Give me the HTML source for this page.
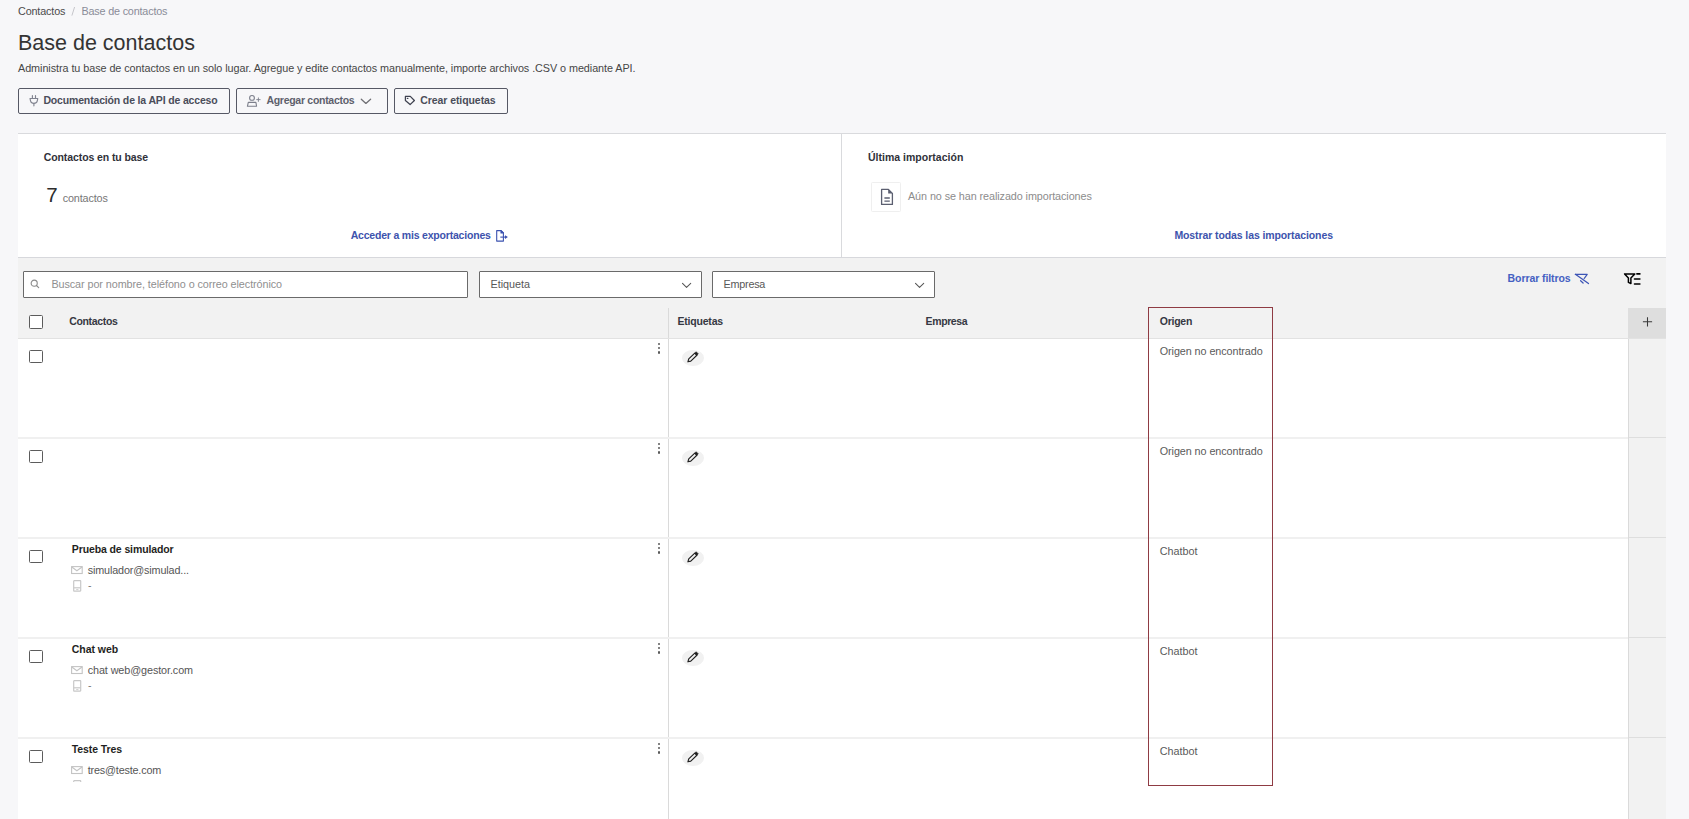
<!DOCTYPE html>
<html lang="es">
<head>
<meta charset="utf-8">
<title>Base de contactos</title>
<style>
*{box-sizing:border-box;margin:0;padding:0}
html,body{width:1689px;height:819px;overflow:hidden;background:#f7f7f9;font-family:"Liberation Sans",sans-serif}
body{position:relative}
.t{position:absolute;white-space:nowrap;line-height:1}
.a{position:absolute}
.btn{position:absolute;top:88px;height:26px;border:1px solid #565865;border-radius:2px;background:#f7f7f9}
.inp{position:absolute;top:271px;height:27px;background:#fff;border:1.2px solid #6a6a6a;border-radius:1px}
.cb{position:absolute;left:29px;width:14px;height:14px;border:1.3px solid #5c5c5c;border-radius:1.5px;background:#fff}
.kb{position:absolute;left:657.8px;width:2.4px;height:2.4px;background:#5a5a5a;border-radius:50%}
.pen{position:absolute;left:682px;width:22px;height:16px;border-radius:50%;background:#f1f1f1}
svg{position:absolute;overflow:visible}
</style>
</head>
<body>
<div class="t" style="left:18px;top:5.76px;font-size:10.8px;color:#4b4b4b;letter-spacing:-0.153px;">Contactos</div>
<svg style="left:70px;top:6px" width="6" height="11" viewBox="0 0 6 11"><path d="M4.6 1L1.9 9.6" stroke="#c6c6cb" stroke-width="1"/></svg>
<div class="t" style="left:81.4px;top:5.76px;font-size:10.8px;color:#8a8c98;letter-spacing:-0.172px;">Base de contactos</div>
<div class="t" style="left:18px;top:32.80px;font-size:21.5px;color:#343434;">Base de contactos</div>
<div class="t" style="left:18px;top:62.76px;font-size:10.8px;color:#464646;letter-spacing:-0.053px;">Administra tu base de contactos en un solo lugar. Agregue y edite contactos manualmente, importe archivos .CSV o mediante API.</div>
<div class="btn" style="left:18px;width:212px"></div>
<div class="btn" style="left:236px;width:152px"></div>
<div class="btn" style="left:394px;width:114px"></div>
<div class="t" style="left:43.4px;top:95.41px;font-size:10.5px;color:#4a4d5a;font-weight:bold;letter-spacing:-0.157px;">Documentación de la API de acceso</div>
<div class="t" style="left:266.4px;top:95.41px;font-size:10.5px;color:#5d606c;font-weight:bold;letter-spacing:-0.280px;">Agregar contactos</div>
<div class="t" style="left:420.2px;top:95.41px;font-size:10.5px;color:#4a4d5a;font-weight:bold;letter-spacing:-0.068px;">Crear etiquetas</div>
<svg style="left:29px;top:94px" width="11" height="13" viewBox="0 0 11 13"><g fill="none" stroke="#80838f" stroke-width="1.15" stroke-linecap="round" stroke-linejoin="round"><path d="M3.4 1.5v2.2M6.5 1.5v2.2"/><path d="M1 4.5H8.8L8.2 7.2Q7.6 9.4 4.9 9.4Q2.2 9.4 1.6 7.2Z"/><path d="M4.9 9.8V11.8"/></g></svg>
<svg style="left:244px;top:92px" width="18" height="16" viewBox="0 0 18 16"><g fill="none" stroke="#7c7f8b" stroke-width="1.1" stroke-linejoin="round"><circle cx="8" cy="5.9" r="2.4"/><path d="M4.3 10.4H11.9L12.6 14.3H3.4Z"/><path d="M14.4 5.5V9.8M12.3 7.6H16.5" stroke-width="0.9"/></g></svg>
<svg style="left:355px;top:94px" width="20" height="14" viewBox="0 0 20 14"><path d="M6.3 5.3L10.9 9.4L15.6 5.3" fill="none" stroke="#6f6f74" stroke-width="1.3" stroke-linecap="round" stroke-linejoin="round"/></svg>
<svg style="left:400px;top:92px" width="18" height="16" viewBox="0 0 18 16"><path d="M5.4 4.4H10.3L14.4 8.5L10.1 12.6L5.4 8.6Z" fill="none" stroke="#3f4250" stroke-width="1.25" stroke-linejoin="round"/><ellipse cx="7.6" cy="6.4" rx="0.9" ry="0.6" fill="#3f4250"/></svg>
<div class="a" style="left:18px;top:133px;width:1648px;height:125px;background:#fff;border-top:1px solid #d9dadd;border-bottom:1px solid #d7d8dc"></div>
<div class="a" style="left:841px;top:134px;width:1px;height:123px;background:#d9dadd"></div>
<div class="t" style="left:43.7px;top:152.41px;font-size:10.5px;color:#303139;font-weight:bold;letter-spacing:-0.089px;">Contactos en tu base</div>
<div class="t" style="left:46.3px;top:184.85px;font-size:20.5px;color:#2d2d2d;">7</div>
<div class="t" style="left:62.7px;top:193.06px;font-size:10.8px;color:#767676;letter-spacing:-0.128px;">contactos</div>
<div class="t" style="left:350.7px;top:230.01px;font-size:10.5px;color:#3d53ad;font-weight:bold;letter-spacing:-0.197px;">Acceder a mis exportaciones</div>
<svg style="left:492px;top:226px" width="18" height="18" viewBox="0 0 18 18"><g stroke="#3b52b0" stroke-width="1.1" stroke-linejoin="round"><path d="M4.7 4.6H9L11.4 7V15.1H4.7Z" fill="none"/><path d="M9 4.6V7H11.4Z" fill="#3b52b0"/><path d="M8.3 11.1H13.5" fill="none"/></g><path d="M13 9.2L15.9 11.1L13 13Z" fill="#3b52b0"/></svg>
<div class="t" style="left:867.9px;top:151.71px;font-size:10.5px;color:#303139;font-weight:bold;letter-spacing:0.024px;">Última importación</div>
<div class="a" style="left:871px;top:182px;width:30px;height:30px;border:1px solid #efefef;border-radius:1.5px;background:#fff"></div>
<svg style="left:880px;top:187.5px" width="15" height="18" viewBox="0 0 15 18"><g fill="none" stroke="#5b5f70" stroke-width="1.3" stroke-linejoin="round"><path d="M1.6 1.4h6.8l4 4v11H1.6z"/><path d="M4.4 10h5.4M4.4 13.1h5.4"/></g><path d="M8.2 1.4v4.2h4.2z" fill="#5b5f70"/></svg>
<div class="t" style="left:908px;top:190.86px;font-size:10.8px;color:#8c8c8c;letter-spacing:-0.078px;">Aún no se han realizado importaciones</div>
<div class="t" style="left:1174.4px;top:230.01px;font-size:10.5px;color:#3d53ad;font-weight:bold;letter-spacing:-0.101px;">Mostrar todas las importaciones</div>
<div class="a" style="left:18px;top:258px;width:1648px;height:561px;background:#f2f2f2"></div>
<div class="inp" style="left:23px;width:445px"></div>
<div class="inp" style="left:479px;width:223px"></div>
<div class="inp" style="left:712px;width:223px"></div>
<svg style="left:30px;top:280px" width="10" height="10" viewBox="0 0 10 10"><g fill="none" stroke="#8a8a8a" stroke-width="1.1" stroke-linecap="round"><circle cx="4.2" cy="3.2" r="3.05"/><path d="M6.5 5.5L8.7 7.6"/></g></svg>
<div class="t" style="left:51.4px;top:279.16px;font-size:10.8px;color:#8f8f8f;letter-spacing:-0.071px;">Buscar por nombre, teléfono o correo electrónico</div>
<div class="t" style="left:490.5px;top:279.16px;font-size:10.8px;color:#575757;letter-spacing:-0.019px;">Etiqueta</div>
<div class="t" style="left:723.6px;top:279.16px;font-size:10.8px;color:#575757;letter-spacing:-0.253px;">Empresa</div>
<svg style="left:680px;top:280px" width="14" height="10" viewBox="0 0 14 10"><path d="M2.5 3.4L6.55 7.4L10.7 3.4" fill="none" stroke="#555" stroke-width="1.05" stroke-linecap="round" stroke-linejoin="round"/></svg>
<svg style="left:912.6px;top:280px" width="14" height="10" viewBox="0 0 14 10"><path d="M2.5 3.4L6.55 7.4L10.7 3.4" fill="none" stroke="#555" stroke-width="1.05" stroke-linecap="round" stroke-linejoin="round"/></svg>
<div class="t" style="left:1507.6px;top:273.31px;font-size:10.5px;color:#4560c2;font-weight:bold;letter-spacing:-0.083px;">Borrar filtros</div>
<svg style="left:1570px;top:268px" width="22" height="20" viewBox="0 0 22 20"><g fill="none" stroke="#3d55b6" stroke-width="1.25" stroke-linecap="round" stroke-linejoin="round"><path d="M5.4 6.3H17.2L14.2 10.5"/><path d="M5.4 6.3L18.5 15.6"/><path d="M10.6 12.7L13.1 15"/></g></svg>
<svg style="left:1618px;top:268px" width="26" height="20" viewBox="0 0 26 20"><path d="M6.6 5.9H16.8L12.9 9.9V15.6L10.4 14.3V9.9Z" fill="none" stroke="#000" stroke-width="1.5" stroke-linejoin="round"/><path d="M18.9 5.9H21.9M16.5 11H21.9M16.5 16H21.9" stroke="#000" stroke-width="1.6" stroke-linecap="round"/></svg>
<div class="a" style="left:18px;top:338px;width:1610px;height:481px;background:#fff"></div>
<div class="a" style="left:1628px;top:308px;width:38px;height:30px;background:#dedede"></div>
<div class="a" style="left:1628px;top:338px;width:1px;height:481px;background:#dadada"></div>
<div class="a" style="left:668px;top:308px;width:1px;height:511px;background:#dadada"></div>
<div class="cb" style="top:315px"></div>
<div class="t" style="left:69.2px;top:315.81px;font-size:10.5px;color:#363842;font-weight:bold;letter-spacing:-0.330px;">Contactos</div>
<div class="t" style="left:677.5px;top:315.81px;font-size:10.5px;color:#363842;font-weight:bold;letter-spacing:-0.208px;">Etiquetas</div>
<div class="t" style="left:925.6px;top:315.81px;font-size:10.5px;color:#363842;font-weight:bold;letter-spacing:-0.393px;">Empresa</div>
<div class="t" style="left:1159.8px;top:315.81px;font-size:10.5px;color:#363842;font-weight:bold;letter-spacing:-0.268px;">Origen</div>
<svg style="left:1642px;top:316px" width="11" height="11" viewBox="0 0 11 11"><path d="M5.5 1.2v9.2M0.9 5.8h9.2" stroke="#3a3a3a" stroke-width="1.05"/></svg>
<div class="a" style="left:18px;top:338px;width:1648px;height:1px;background:#e2e2e2"></div>
<div class="cb" style="top:350px;height:12.8px"></div>
<div class="kb" style="top:342.7px"></div>
<div class="kb" style="top:347.0px"></div>
<div class="kb" style="top:351.3px"></div>
<div class="pen" style="top:350px"></div>
<svg style="left:682px;top:348px" width="20" height="18" viewBox="0 0 20 18"><path d="M5.9 13.8L8.8 13.08L14.86 7.29L12.78 5.13L6.74 10.92Z" fill="none" stroke="#1e1e1e" stroke-width="1.15" stroke-linejoin="round"/><path d="M14.86 7.29L16.3 5.9L14.2 3.75L12.78 5.13Z" fill="#1e1e1e" stroke="#1e1e1e" stroke-width="0.6" stroke-linejoin="round"/></svg>
<div class="t" style="left:1159.8px;top:345.76px;font-size:10.8px;color:#5a5a5a;letter-spacing:-0.083px;">Origen no encontrado</div>
<div class="a" style="left:18px;top:437px;width:1610px;height:2px;background:#f0f0f0"></div>
<div class="a" style="left:1629px;top:437px;width:37px;height:1px;background:#dedede"></div>
<div class="cb" style="top:450px;height:12.8px"></div>
<div class="kb" style="top:442.7px"></div>
<div class="kb" style="top:447.0px"></div>
<div class="kb" style="top:451.3px"></div>
<div class="pen" style="top:450px"></div>
<svg style="left:682px;top:448px" width="20" height="18" viewBox="0 0 20 18"><path d="M5.9 13.8L8.8 13.08L14.86 7.29L12.78 5.13L6.74 10.92Z" fill="none" stroke="#1e1e1e" stroke-width="1.15" stroke-linejoin="round"/><path d="M14.86 7.29L16.3 5.9L14.2 3.75L12.78 5.13Z" fill="#1e1e1e" stroke="#1e1e1e" stroke-width="0.6" stroke-linejoin="round"/></svg>
<div class="t" style="left:1159.8px;top:445.76px;font-size:10.8px;color:#5a5a5a;letter-spacing:-0.083px;">Origen no encontrado</div>
<div class="a" style="left:18px;top:537px;width:1610px;height:2px;background:#f0f0f0"></div>
<div class="a" style="left:1629px;top:537px;width:37px;height:1px;background:#dedede"></div>
<div class="cb" style="top:550px;height:12.8px"></div>
<div class="kb" style="top:542.7px"></div>
<div class="kb" style="top:547.0px"></div>
<div class="kb" style="top:551.3px"></div>
<div class="pen" style="top:550px"></div>
<svg style="left:682px;top:548px" width="20" height="18" viewBox="0 0 20 18"><path d="M5.9 13.8L8.8 13.08L14.86 7.29L12.78 5.13L6.74 10.92Z" fill="none" stroke="#1e1e1e" stroke-width="1.15" stroke-linejoin="round"/><path d="M14.86 7.29L16.3 5.9L14.2 3.75L12.78 5.13Z" fill="#1e1e1e" stroke="#1e1e1e" stroke-width="0.6" stroke-linejoin="round"/></svg>
<div class="t" style="left:1159.8px;top:545.76px;font-size:10.8px;color:#5a5a5a;letter-spacing:-0.021px;">Chatbot</div>
<div class="a" style="left:18px;top:538px;width:640px;height:100px;overflow:hidden"><div class="t" style="left:53.8px;top:5.71px;font-size:10.5px;color:#1f1f22;font-weight:bold;letter-spacing:-0.109px;">Prueba de simulador</div>
<svg style="left:53px;top:28px" width="12" height="9" viewBox="0 0 12 9"><g fill="none" stroke="#c4c4c4" stroke-width="1.1"><rect x="0.6" y="0.6" width="10.6" height="6.9"/><path d="M0.8 1l5.1 3.8 5.1-3.8"/></g></svg>
<div class="t" style="left:69.7px;top:26.76px;font-size:10.8px;color:#555;letter-spacing:-0.137px;">simulador@simulad...</div>
<svg style="left:55px;top:42px" width="9" height="12" viewBox="0 0 9 12"><g fill="none" stroke="#c8c8c8" stroke-width="1.2"><rect x="0.7" y="0.7" width="7" height="10.4" rx="0.5"/><path d="M0.8 7.8h7"/><path d="M3.2 9.6h2.2" stroke-width="0.9"/></g></svg>
<div class="t" style="left:70px;top:41.61px;font-size:10.5px;color:#777;">-</div>
</div>
<div class="a" style="left:18px;top:637px;width:1610px;height:2px;background:#f0f0f0"></div>
<div class="a" style="left:1629px;top:637px;width:37px;height:1px;background:#dedede"></div>
<div class="cb" style="top:650px;height:12.8px"></div>
<div class="kb" style="top:642.7px"></div>
<div class="kb" style="top:647.0px"></div>
<div class="kb" style="top:651.3px"></div>
<div class="pen" style="top:650px"></div>
<svg style="left:682px;top:648px" width="20" height="18" viewBox="0 0 20 18"><path d="M5.9 13.8L8.8 13.08L14.86 7.29L12.78 5.13L6.74 10.92Z" fill="none" stroke="#1e1e1e" stroke-width="1.15" stroke-linejoin="round"/><path d="M14.86 7.29L16.3 5.9L14.2 3.75L12.78 5.13Z" fill="#1e1e1e" stroke="#1e1e1e" stroke-width="0.6" stroke-linejoin="round"/></svg>
<div class="t" style="left:1159.8px;top:645.76px;font-size:10.8px;color:#5a5a5a;letter-spacing:-0.021px;">Chatbot</div>
<div class="a" style="left:18px;top:638px;width:640px;height:100px;overflow:hidden"><div class="t" style="left:53.8px;top:5.71px;font-size:10.5px;color:#1f1f22;font-weight:bold;letter-spacing:-0.053px;">Chat web</div>
<svg style="left:53px;top:28px" width="12" height="9" viewBox="0 0 12 9"><g fill="none" stroke="#c4c4c4" stroke-width="1.1"><rect x="0.6" y="0.6" width="10.6" height="6.9"/><path d="M0.8 1l5.1 3.8 5.1-3.8"/></g></svg>
<div class="t" style="left:69.7px;top:26.76px;font-size:10.8px;color:#555;letter-spacing:-0.090px;">chat web@gestor.com</div>
<svg style="left:55px;top:42px" width="9" height="12" viewBox="0 0 9 12"><g fill="none" stroke="#c8c8c8" stroke-width="1.2"><rect x="0.7" y="0.7" width="7" height="10.4" rx="0.5"/><path d="M0.8 7.8h7"/><path d="M3.2 9.6h2.2" stroke-width="0.9"/></g></svg>
<div class="t" style="left:70px;top:41.61px;font-size:10.5px;color:#777;">-</div>
</div>
<div class="a" style="left:18px;top:737px;width:1610px;height:2px;background:#f0f0f0"></div>
<div class="a" style="left:1629px;top:737px;width:37px;height:1px;background:#dedede"></div>
<div class="cb" style="top:750px;height:12.8px"></div>
<div class="kb" style="top:742.7px"></div>
<div class="kb" style="top:747.0px"></div>
<div class="kb" style="top:751.3px"></div>
<div class="pen" style="top:750px"></div>
<svg style="left:682px;top:748px" width="20" height="18" viewBox="0 0 20 18"><path d="M5.9 13.8L8.8 13.08L14.86 7.29L12.78 5.13L6.74 10.92Z" fill="none" stroke="#1e1e1e" stroke-width="1.15" stroke-linejoin="round"/><path d="M14.86 7.29L16.3 5.9L14.2 3.75L12.78 5.13Z" fill="#1e1e1e" stroke="#1e1e1e" stroke-width="0.6" stroke-linejoin="round"/></svg>
<div class="t" style="left:1159.8px;top:745.76px;font-size:10.8px;color:#5a5a5a;letter-spacing:-0.021px;">Chatbot</div>
<div class="a" style="left:18px;top:738px;width:640px;height:44px;overflow:hidden"><div class="t" style="left:53.8px;top:5.71px;font-size:10.5px;color:#1f1f22;font-weight:bold;letter-spacing:-0.096px;">Teste Tres</div>
<svg style="left:53px;top:28px" width="12" height="9" viewBox="0 0 12 9"><g fill="none" stroke="#c4c4c4" stroke-width="1.1"><rect x="0.6" y="0.6" width="10.6" height="6.9"/><path d="M0.8 1l5.1 3.8 5.1-3.8"/></g></svg>
<div class="t" style="left:69.7px;top:26.76px;font-size:10.8px;color:#555;letter-spacing:-0.168px;">tres@teste.com</div>
<svg style="left:55px;top:42px" width="9" height="12" viewBox="0 0 9 12"><g fill="none" stroke="#c8c8c8" stroke-width="1.2"><rect x="0.7" y="0.7" width="7" height="10.4" rx="0.5"/><path d="M0.8 7.8h7"/><path d="M3.2 9.6h2.2" stroke-width="0.9"/></g></svg>
<div class="t" style="left:70px;top:41.61px;font-size:10.5px;color:#777;">-</div>
</div>
<div class="a" style="left:1148px;top:307px;width:125px;height:479px;border:1.3px solid #8f3b43"></div>
</body>
</html>
